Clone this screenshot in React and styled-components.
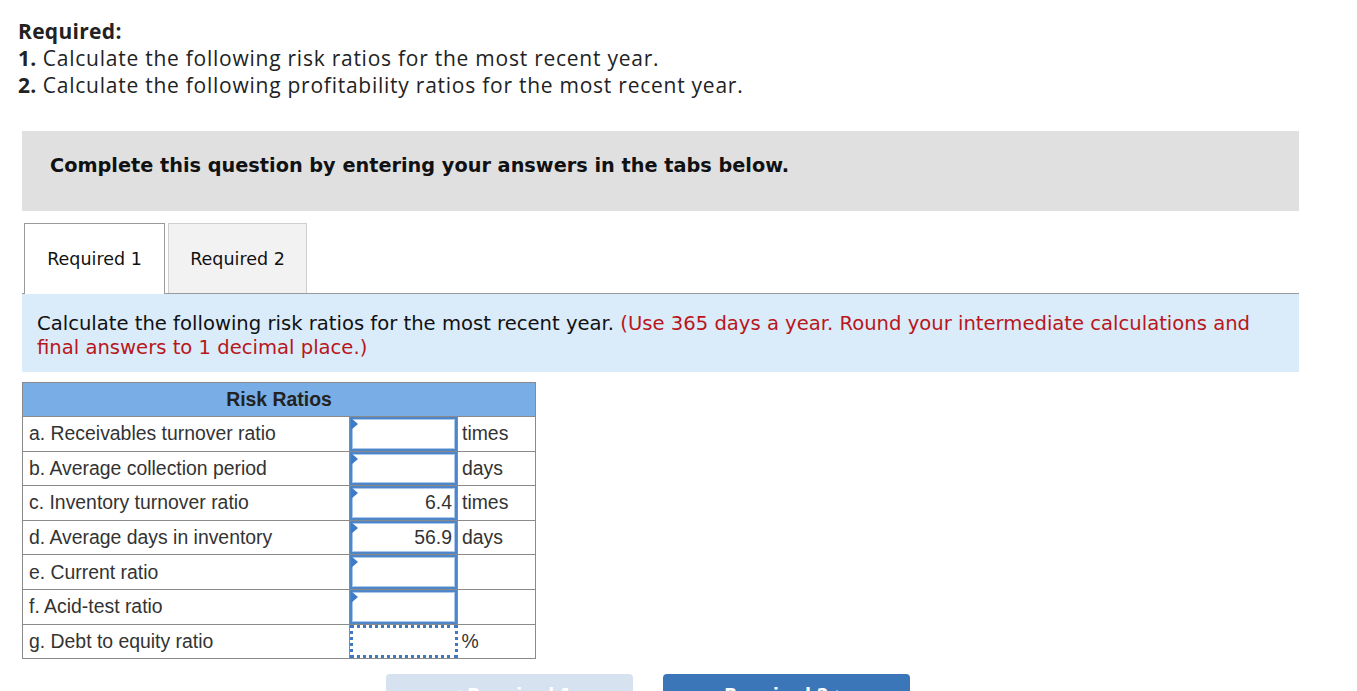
import styled, { createGlobalStyle } from "styled-components";

const GlobalStyle = createGlobalStyle`
  body {
    margin: 0;
    background: #fff;
    color: #222;
  }
`;

const Page = styled.div`
  padding: 18px 58px 0 22px;
  width: 1277px;
`;

const Intro = styled.div`
  font-family: "Open Sans", Lato, sans-serif;
  font-size: 21px;
  letter-spacing: 0.75px;
  line-height: 27px;
  color: #222;
  margin-left: -4px;
`;

const IntroLine = styled.div`
  b {
    font-weight: 700;
    letter-spacing: 0.3px;
  }
`;

const Banner = styled.div`
  margin-top: 32px;
  height: 80px;
  box-sizing: border-box;
  padding: 0 0 12px 28px;
  background: #e0e0e0;
  display: flex;
  align-items: center;
  font-family: "DejaVu Sans", Verdana, sans-serif;
  font-weight: 700;
  font-size: 19.3px;
  color: #111;
`;

const TabBar = styled.div`
  margin-top: 12px;
  display: flex;
  align-items: flex-end;
  gap: 3px;
  border-bottom: 1px solid #9a9a9a;
  padding-left: 2px;
`;

const Tab = styled.div`
  width: ${(p) => p.$w}px;
  box-sizing: border-box;
  display: flex;
  align-items: center;
  justify-content: center;
  font-family: "DejaVu Sans", Verdana, sans-serif;
  font-size: 17.5px;
  color: #111;
  background: ${(p) => (p.$active ? "#fff" : "#f2f2f2")};
  border: 1px solid ${(p) => (p.$active ? "#9a9a9a" : "#cfcfcf")};
  border-bottom: none;
  margin-bottom: ${(p) => (p.$active ? "-1px" : "0")};
  height: ${(p) => (p.$active ? "71px" : "70px")};
`;

const Instructions = styled.div`
  background: #daebf9;
  padding: 18px 15px 12px;
  font-family: "DejaVu Sans", Verdana, sans-serif;
  font-size: 19.6px;
  line-height: 24px;
  color: #111;
`;

const Note = styled.span`
  color: #b8161b;
`;

const Table = styled.table`
  margin-top: 10px;
  border-collapse: collapse;
  font-family: "Liberation Sans", Arial, sans-serif;
  font-size: 19.4px;
  color: #333;
  border: 1px solid #8a8a8a;
`;

const HeadCell = styled.th`
  background: #78ade5;
  height: 33px;
  font-weight: 700;
  color: #222;
  text-align: center;
  padding: 0;
  border-bottom: 1px solid #8a8a8a;
`;

const LabelCell = styled.td`
  width: 320px;
  padding: 0 0 0 6px;
  border-top: 1px solid #8a8a8a;
  border-right: 1px solid #8a8a8a;
`;

const InputCell = styled.td`
  width: 107px;
  padding: 0;
  border-top: 1px solid #8a8a8a;
  border-right: ${(p) => (p.$dotted ? "none" : "1px solid #8a8a8a")};
`;

const UnitCell = styled.td`
  width: 73px;
  padding: 0 0 0 4px;
  border-top: 1px solid #8a8a8a;
`;

const Field = styled.div`
  position: relative;
  height: 33.6px;
  box-sizing: border-box;
  border: ${(p) => (p.$dotted ? "3px dotted #3d78c0" : "2px solid #4f86c8")};
  box-shadow: ${(p) => (p.$dotted ? "none" : "inset 0 0 0 1px #a9c8ec")};
  display: flex;
  align-items: center;
  justify-content: flex-end;
  padding-right: 3px;
  color: #333;
  background: #fff;
`;

const Marker = styled.span`
  position: absolute;
  left: -1px;
  top: -1px;
  width: 0;
  height: 0;
  border-top: 6px solid transparent;
  border-bottom: 6px solid transparent;
  border-left: 7px solid #3d7cc9;
`;

const Buttons = styled.div`
  margin-top: 15px;
  display: flex;
  gap: 30px;
  padding-left: 364px;
`;

const NavButton = styled.div`
  width: 247px;
  height: 40px;
  border-radius: 4px 4px 0 0;
  background: ${(p) => (p.$primary ? "#3a76b8" : "#d6e2f0")};
  color: #fff;
  font-family: "DejaVu Sans", Verdana, sans-serif;
  font-weight: 700;
  font-size: 17px;
  display: flex;
  justify-content: center;
  padding-top: 11px;
  box-sizing: border-box;
`;

const rows = [
  { label: "a. Receivables turnover ratio", value: "", unit: "times" },
  { label: "b. Average collection period", value: "", unit: "days" },
  { label: "c. Inventory turnover ratio", value: "6.4", unit: "times" },
  { label: "d. Average days in inventory", value: "56.9", unit: "days" },
  { label: "e. Current ratio", value: "", unit: "" },
  { label: "f. Acid-test ratio", value: "", unit: "" },
  { label: "g. Debt to equity ratio", value: "", unit: "%", dotted: true },
];

export default function App() {
  return (
    <>
      <GlobalStyle />
      <Page>
        <Intro>
          <IntroLine>
            <b>Required:</b>
          </IntroLine>
          <IntroLine>
            <b>1.</b> Calculate the following risk ratios for the most recent year.
          </IntroLine>
          <IntroLine>
            <b>2.</b> Calculate the following profitability ratios for the most recent year.
          </IntroLine>
        </Intro>

        <Banner>Complete this question by entering your answers in the tabs below.</Banner>

        <TabBar>
          <Tab $active $w={141}>Required 1</Tab>
          <Tab $w={139}>Required 2</Tab>
        </TabBar>

        <Instructions>
          Calculate the following risk ratios for the most recent year.{" "}
          <Note>
            (Use 365 days a year. Round your intermediate calculations and final answers to 1
            decimal place.)
          </Note>
        </Instructions>

        <Table>
          <thead>
            <tr>
              <HeadCell colSpan={3}>Risk Ratios</HeadCell>
            </tr>
          </thead>
          <tbody>
            {rows.map((r) => (
              <tr key={r.label}>
                <LabelCell>{r.label}</LabelCell>
                <InputCell $dotted={r.dotted}>
                  <Field $dotted={r.dotted}>
                    {!r.dotted && <Marker />}
                    {r.value}
                  </Field>
                </InputCell>
                <UnitCell>{r.unit}</UnitCell>
              </tr>
            ))}
          </tbody>
        </Table>

        <Buttons>
          <NavButton>&lt; Required 1</NavButton>
          <NavButton $primary>Required 2 &gt;</NavButton>
        </Buttons>
      </Page>
    </>
  );
}
